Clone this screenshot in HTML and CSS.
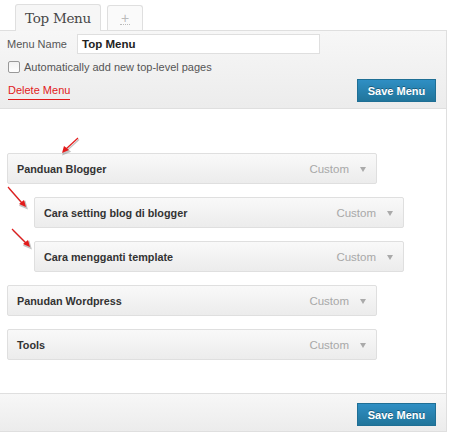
FILE: index.html
```html
<!DOCTYPE html>
<html>
<head>
<meta charset="utf-8">
<link rel="stylesheet" href="styles.css">
</head>
<body>
<div class="menu-edit">
  <div class="tabs">
    <div class="tab active">Top Menu</div>
    <div class="tab add"><span>+</span></div>
  </div>
  <div class="header">
    <div class="row name-row">
      <span class="label">Menu Name</span>
      <div class="input">Top Menu</div>
    </div>
    <div class="row auto-row">
      <span class="cb"></span>
      <span class="label">Automatically add new top-level pages</span>
    </div>
    <div class="row actions">
      <span class="delete">Delete Menu</span>
      <span class="btn">Save Menu</span>
    </div>
  </div>
  <div class="body">
    <div class="items">
      <div class="item"><span class="title">Panduan Blogger</span><span class="type">Custom</span><span class="arrow"></span></div>
      <div class="item sub"><span class="title">Cara setting blog di blogger</span><span class="type">Custom</span><span class="arrow"></span></div>
      <div class="item sub"><span class="title">Cara mengganti template</span><span class="type">Custom</span><span class="arrow"></span></div>
      <div class="item"><span class="title">Panudan Wordpress</span><span class="type">Custom</span><span class="arrow"></span></div>
      <div class="item"><span class="title">Tools</span><span class="type">Custom</span><span class="arrow"></span></div>
    </div>
    <svg class="arrows" width="120" height="150" viewBox="0 0 120 150">
      <g stroke="#888" stroke-width="1.2" fill="#888" opacity="0.5" transform="translate(1,1.5)">
        <line x1="78" y1="29" x2="66" y2="40"/>
        <polygon points="62,44 64,37 69,41"/>
        <line x1="8" y1="78" x2="22" y2="94"/>
        <polygon points="26,98 19,95 24,91"/>
        <line x1="12" y1="120" x2="26" y2="134"/>
        <polygon points="30,138 23,135 28,131"/>
      </g>
      <g stroke="#e31b1b" stroke-width="1.2" fill="#e31b1b">
        <line x1="78" y1="29" x2="66" y2="40"/>
        <polygon points="62,44 64,37 69,41" stroke="none"/>
        <line x1="8" y1="78" x2="22" y2="94"/>
        <polygon points="26,98 19,95 24,91" stroke="none"/>
        <line x1="12" y1="120" x2="26" y2="134"/>
        <polygon points="30,138 23,135 28,131" stroke="none"/>
      </g>
    </svg>
  </div>
  <div class="footer">
    <span class="btn">Save Menu</span>
  </div>
</div>
</body>
</html>
```
FILE: styles.css
```css
html, body {
  margin: 0;
  padding: 0;
  background: #fff;
}
body {
  font-family: "Liberation Sans", Arial, sans-serif;
  font-size: 11px;
  color: #555;
}
.menu-edit {
  width: 447px;
}
.tabs {
  height: 30px;
  display: flex;
  align-items: flex-end;
  padding-left: 15px;
}
.tab {
  box-sizing: border-box;
  height: 26px;
  border: 1px solid #dfdfdf;
  border-bottom: none;
  border-radius: 3px 3px 0 0;
  display: flex;
  align-items: center;
  justify-content: center;
}
.tab.active {
  width: 86px;
  background: #f6f6f6;
  font-family: "DejaVu Serif", "Liberation Serif", serif;
  font-size: 13.5px;
  font-weight: normal;
  color: #464646;
  letter-spacing: -0.3px;
  position: relative;
  margin-bottom: -1px;
  height: 27px;
  padding-bottom: 1px;
}
.tab.add {
  width: 36px;
  margin-left: 6px;
  height: 25px;
  background: #fafafa;
  color: #bbb;
  font-size: 14px;
}
.tab.add span {
  border-bottom: 1px dotted #bbb;
  line-height: 12px;
  padding: 0 1px;
}
.header {
  box-sizing: border-box;
  height: 79px;
  border-top: 1px solid #dfdfdf;
  border-right: 1px solid #dfdfdf;
  border-bottom: 1px solid #dfdfdf;
  background: linear-gradient(#f7f7f7, #ececec);
  padding: 3px 10px 0 7px;
}
.row {
  display: flex;
  align-items: center;
}
.name-row {
  height: 20px;
}
.name-row .label {
  width: 70px;
}
.input {
  box-sizing: border-box;
  width: 243px;
  height: 20px;
  background: #fff;
  border: 1px solid #dfdfdf;
  padding: 0 4px;
  line-height: 18px;
  font-size: 11.5px;
  font-weight: bold;
  color: #222;
}
.auto-row {
  margin-top: 7px;
  height: 12px;
  padding-left: 1px;
}
.cb {
  box-sizing: border-box;
  width: 12px;
  height: 12px;
  border: 1px solid #999;
  border-radius: 2px;
  background: linear-gradient(#f2f2f2, #fff);
  margin-right: 4px;
}
.actions {
  margin-top: 6px;
  justify-content: space-between;
  padding-left: 1px;
}
.delete {
  color: #e11b1b;
  border-bottom: 1px solid #e11b1b;
  line-height: 13px;
  padding-bottom: 2px;
  margin-top: 2px;
}
.btn {
  box-sizing: border-box;
  width: 79px;
  height: 23px;
  display: flex;
  align-items: center;
  justify-content: center;
  background: linear-gradient(#2f8fc4, #21759b);
  border: 1px solid #1f6f95;
  color: #fff;
  font-weight: bold;
  font-size: 11px;
  text-shadow: 0 -1px 0 rgba(0,0,0,0.35);
}
.body {
  position: relative;
  box-sizing: border-box;
  height: 284px;
  border-right: 1px solid #dfdfdf;
  padding-top: 44px;
}
.items {
  display: flex;
  flex-direction: column;
  gap: 13px;
}
.item {
  box-sizing: border-box;
  width: 370px;
  height: 31px;
  margin-left: 7px;
  border: 1px solid #dfdfdf;
  border-radius: 2px;
  background: linear-gradient(#f9f9f9, #ececec);
  display: flex;
  align-items: center;
  padding: 0 10px 0 9px;
}
.item.sub {
  margin-left: 34px;
}
.title {
  flex: 1;
  font-weight: bold;
  font-size: 10.8px;
  color: #333;
}
.type {
  font-size: 11.5px;
  color: #a8a8a8;
}
.arrow {
  width: 0;
  height: 0;
  border-left: 3px solid transparent;
  border-right: 3px solid transparent;
  border-top: 5px solid #aaa;
  margin-left: 11px;
  margin-top: 1px;
}
.arrows {
  position: absolute;
  left: 0;
  top: 0;
}
.footer {
  box-sizing: border-box;
  height: 39px;
  border-top: 1px solid #dfdfdf;
  border-right: 1px solid #dfdfdf;
  border-bottom: 1px solid #dfdfdf;
  background: linear-gradient(#f7f7f7, #ececec);
  display: flex;
  justify-content: flex-end;
  padding: 9px 10px 0 0;
}
```
